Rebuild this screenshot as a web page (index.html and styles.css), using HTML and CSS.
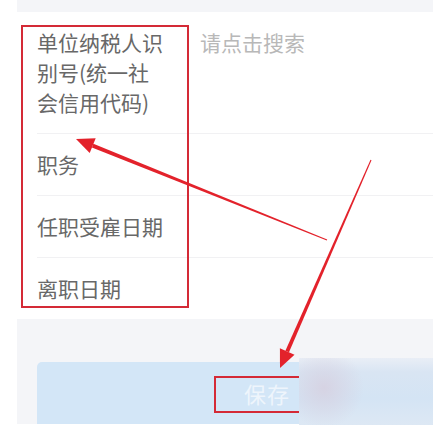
FILE: index.html
```html
<!DOCTYPE html>
<html lang="zh-CN">
<head>
<meta charset="utf-8">
<link rel="stylesheet" href="styles.css">
</head>
<body>
<div class="page">
  <div class="band"></div>
  <div class="form">
    <div class="row">
      <div class="label">单位纳税人识别号(统一社会信用代码)</div>
      <div class="value placeholder">请点击搜索</div>
    </div>
    <div class="row">
      <div class="label">职务</div>
    </div>
    <div class="row">
      <div class="label">任职受雇日期</div>
    </div>
    <div class="row">
      <div class="label">离职日期</div>
    </div>
  </div>
  <div class="footer">
    <div class="save-btn"><span class="save-text">保存</span></div>
  </div>
</div>

<div class="mark mark-labels"></div>
<div class="mark mark-save"></div>
<div class="blur-patch"></div>

<svg class="arrows" width="433" height="425" viewBox="0 0 433 425">
  <polygon points="93.4,143.8 91.9,147.6 326.8,240.5 327.2,239.5" fill="#e3222b"/>
  <polygon points="76,139 95.7,138.3 89.7,153.1" fill="#e3222b"/>
  <polygon points="289.0,352.3 285.4,350.7 370.5,159.8 371.5,160.2" fill="#e3222b"/>
  <polygon points="280,368 294.5,354.7 279.9,348.3" fill="#e3222b"/>
</svg>
</body>
</html>
```

FILE: styles.css
```css
html, body {
  margin: 0;
  padding: 0;
  background: #ffffff;
  width: 433px;
  height: 425px;
  overflow: hidden;
}

body {
  position: relative;
  font-family: "Noto Sans CJK SC", "Noto Sans", sans-serif;
}

.page {
  padding-left: 17px;
}

.band {
  height: 12px;
  background: #f4f5f8;
}

.form {
  background: #ffffff;
}

.row {
  display: flex;
  margin-left: 20px;
  padding: 15px 0 16px;
  border-bottom: 1px solid #f1f1f3;
}

.row:last-child {
  border-bottom: none;
}

.label {
  width: 130px;
  margin-right: 33px;
  font-size: 21px;
  line-height: 30px;
  color: #686868;
  flex-shrink: 0;
}

.value {
  font-size: 21px;
  line-height: 30px;
}

.placeholder {
  color: #b8b8b8;
}

.footer {
  background: #f4f5f8;
  padding: 43px 0 0 20px;
  height: 105px;
  box-sizing: border-box;
  overflow: hidden;
}

.save-btn {
  width: 460px;
  height: 62px;
  background: #d3e6f7;
  border-radius: 5px 5px 0 0;
  display: flex;
  justify-content: center;
  padding-top: 16px;
  box-sizing: border-box;
}

.save-text {
  font-size: 22px;
  line-height: 30px;
  color: #eef5fc;
  letter-spacing: 1px;
}

.mark {
  position: absolute;
  border: 2px solid #d42a36;
  box-sizing: border-box;
}

.mark-labels {
  left: 21px;
  top: 25px;
  width: 168px;
  height: 283px;
}

.mark-save {
  left: 214px;
  top: 376px;
  width: 100px;
  height: 37px;
}

.blur-patch {
  position: absolute;
  left: 299px;
  top: 358px;
  width: 134px;
  height: 67px;
  background:
    radial-gradient(ellipse 40px 40px at 25px 30px, rgba(214, 210, 226, 0.95), rgba(214, 210, 226, 0) 100%),
    linear-gradient(to bottom, #e9eef6 0px, #d9e5f3 14px, #d4e4f4 40px, #dde8f4 67px);
}

.arrows {
  position: absolute;
  left: 0;
  top: 0;
  pointer-events: none;
}
```
